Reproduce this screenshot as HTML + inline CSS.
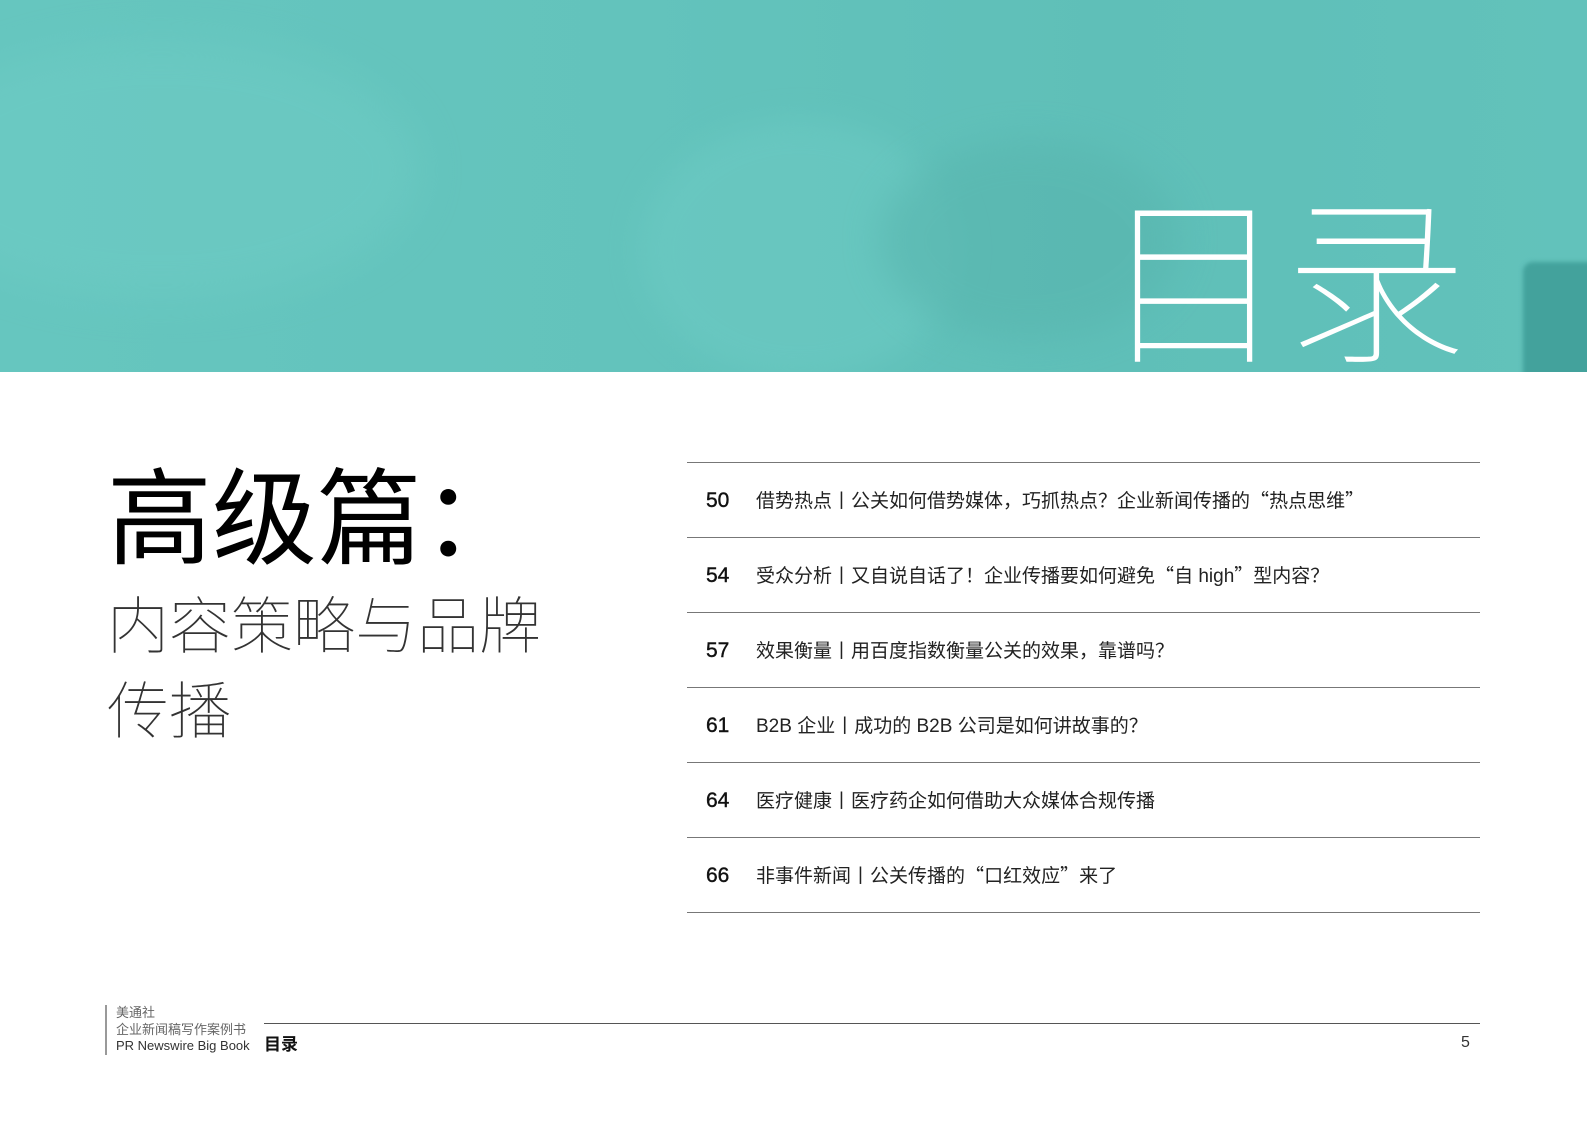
<!DOCTYPE html>
<html><head><meta charset="utf-8"><style>
*{margin:0;padding:0;box-sizing:border-box}
body{width:1587px;height:1122px;background:#fff;position:relative;overflow:hidden;font-family:"Liberation Sans","Noto Sans CJK SC",sans-serif;color:#222}
.hdr{position:absolute;left:0;top:0;width:1587px;height:372px;background:linear-gradient(90deg,#66c6bf 0%,#63c3bc 40%,#5fbfb8 70%,#62c2bb 100%);overflow:hidden}
.blob{position:absolute;border-radius:50%}
.t1{position:absolute;left:1103px;top:180px;font-size:182px;line-height:1;color:#fff;font-weight:100;font-family:"Noto Sans CJK SC",sans-serif}
.h1{position:absolute;left:107px;top:459px;font-size:105px;line-height:1;color:#000;font-family:"Noto Sans CJK SC",sans-serif;font-weight:400}
.h2{position:absolute;left:107px;top:579px;font-size:62px;line-height:85px;color:#333;font-family:"Noto Sans CJK SC",sans-serif;font-weight:100;width:460px}
.line{position:absolute;left:687px;width:793px;height:1px;background:#777}
.row{position:absolute;left:706px;font-size:19px;line-height:24px;color:#222;white-space:nowrap}
.row b{font-weight:400;display:inline-block;width:50px;font-size:21px;color:#111;-webkit-text-stroke:0.4px #111}
.c{font-family:"Noto Sans CJK SC",sans-serif}
.ft{position:absolute;left:105px;top:1005px;border-left:2px solid #999;padding-left:9px;font-size:13px;line-height:16.5px;color:#666}
</style></head><body>
<div class="hdr">
 <div class="blob" style="left:-100px;top:40px;width:520px;height:260px;background:#6fccc5;opacity:.5;filter:blur(20px)"></div>
 <div class="blob" style="left:640px;top:120px;width:320px;height:260px;background:#6ccac3;opacity:.6;filter:blur(15px)"></div>
 <div class="blob" style="left:880px;top:140px;width:300px;height:200px;background:#58b5ae;opacity:.6;filter:blur(18px)"></div>
 <div style="position:absolute;left:1523px;top:262px;width:100px;height:130px;background:#43a29c;border-radius:10px 0 0 0;filter:blur(2px)"></div>
 <div class="t1">目录</div>
</div>
<div class="h1">高级篇：</div>
<div class="h2">内容策略与品牌传播</div>
<div class="line" style="top:462px"></div>
<div class="line" style="top:537px"></div>
<div class="line" style="top:612px"></div>
<div class="line" style="top:687px"></div>
<div class="line" style="top:762px"></div>
<div class="line" style="top:837px"></div>
<div class="line" style="top:912px"></div>
<div class="row" style="top:488px"><b>50</b>借势热点<span class="c">丨</span>公关如何借势媒体，巧抓热点？企业新闻传播的<span class="c">“</span>热点思维<span class="c">”</span></div>
<div class="row" style="top:563px"><b>54</b>受众分析<span class="c">丨</span>又自说自话了！企业传播要如何避免<span class="c">“</span>自 high<span class="c">”</span>型内容？</div>
<div class="row" style="top:638px"><b>57</b>效果衡量<span class="c">丨</span>用百度指数衡量公关的效果，靠谱吗？</div>
<div class="row" style="top:713px"><b>61</b>B2B 企业<span class="c">丨</span>成功的 B2B 公司是如何讲故事的？</div>
<div class="row" style="top:788px"><b>64</b>医疗健康<span class="c">丨</span>医疗药企如何借助大众媒体合规传播</div>
<div class="row" style="top:863px"><b>66</b>非事件新闻<span class="c">丨</span>公关传播的<span class="c">“</span>口红效应<span class="c">”</span>来了</div>
<div class="ft">美通社<br>企业新闻稿写作案例书<br><span style="color:#333">PR Newswire Big Book</span></div>
<div style="position:absolute;left:264px;top:1030px;font-size:17px;font-weight:700;color:#111;font-family:'Noto Sans CJK SC',sans-serif">目录</div>
<div style="position:absolute;left:264px;top:1023px;width:1216px;height:1px;background:#555"></div>
<div style="position:absolute;left:1461px;top:1034px;font-size:16px;color:#333">5</div>
</body></html>
